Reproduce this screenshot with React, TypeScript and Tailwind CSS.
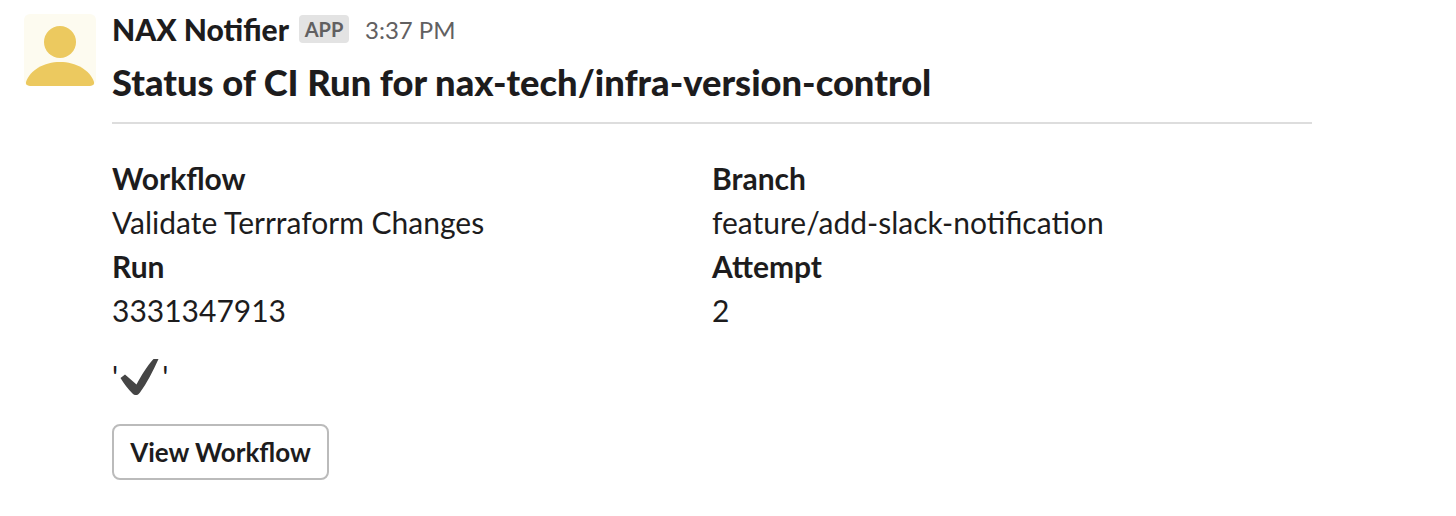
export default function App() {
  return (
    <div className="w-[1456px] h-[516px] bg-white text-[#1d1c1d] font-['Lato',sans-serif] flex items-start pl-6 pt-[14px] overflow-hidden">
      <div className="w-[72px] h-[72px] shrink-0 rounded-[6px] bg-[#fdfbf0] overflow-hidden">
        <svg viewBox="0 0 72 72" className="w-[72px] h-[72px]">
          <circle cx="36" cy="28" r="16" fill="#ecc95f" />
          <path d="M2 68C6 56 20 48 36 48s30 8 34 20c.5 2-1 4-3 4H5c-2 0-3.500-2-3-4z" fill="#ecc95f" />
        </svg>
      </div>
      <div className="ml-4 w-[1200px] flex flex-col">
        <div className="flex items-center h-[30px]">
          <span className="text-[30px] leading-[30px] font-black">NAX Notifier</span>
          <span className="ml-[10px] w-[50px] h-[28px] rounded-[4px] bg-[#e3e3e3] text-[#616061] text-[20px] font-bold flex items-center justify-center">APP</span>
          <span className="ml-4 mt-[2px] text-[24px] leading-[32px] text-[#616061]">3:37 PM</span>
        </div>
        <h1 className="mt-[16px] text-[36.300px] leading-[44px] font-black">Status of CI Run for nax-tech/infra-version-control</h1>
        <div className="mt-[18px] h-[2px] bg-[#dddddd]" />
        <div className="mt-[32px] grid grid-cols-[600px_1fr] text-[30px] leading-[44px]">
          <div className="font-bold">Workflow</div>
          <div className="font-bold">Branch</div>
          <div>Validate Terrraform Changes</div>
          <div>feature/add-slack-notification</div>
          <div className="font-bold">Run</div>
          <div className="font-bold">Attempt</div>
          <div>3331347913</div>
          <div>2</div>
        </div>
        <div className="mt-[24px] h-[40px] flex items-center">
          <span className="text-[30px] leading-none">'</span>
          <svg viewBox="0 0 44 40" className="w-[44px] h-[40px]">
            <path d="M2.500 22L7 18.500L18.500 28.500C23 20 29 10 35.500 3L40.500 3C35 15 29 27 22 36.500C20 39.500 17 40 14.500 37.500C10 33 6 28 2.500 22Z" fill="#454545" />
          </svg>
          <span className="text-[30px] leading-none">'</span>
        </div>
        <button className="mt-[28px] w-[217px] h-[56px] rounded-[8px] border-2 border-[#bbbbbb] bg-white text-[26px] font-bold flex items-center justify-center">View Workflow</button>
      </div>
    </div>
  );
}
